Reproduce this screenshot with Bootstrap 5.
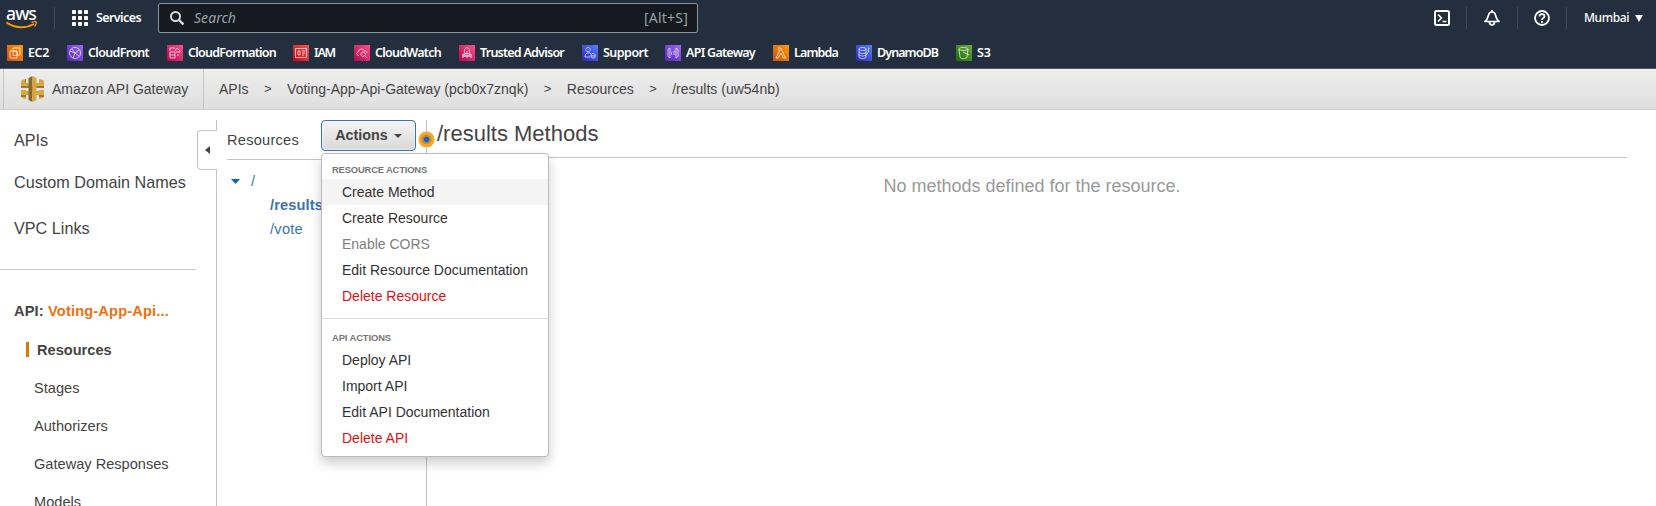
<!DOCTYPE html>
<html lang="en">
<head>
<meta charset="utf-8">
<title>API Gateway</title>
<link href="https://cdn.jsdelivr.net/npm/bootstrap@5.3.0/dist/css/bootstrap.min.css" rel="stylesheet">
<style>
body{font-family:"Liberation Sans",Arial,sans-serif;font-size:14px;line-height:20px;color:#444;height:506px;overflow:hidden;background:#fff}
svg{display:block;flex:none}
.aws-top{background:#232f3e;height:69px;border-bottom:1px solid #545b64;color:#fff;font-family:"Noto Sans","Open Sans",sans-serif}
.top-row{height:36px;padding-left:6px}
.aws-logo{overflow:visible}
.aws-logo text{font:500 17.5px "Noto Sans",sans-serif;fill:#fff}
.vr-line{width:1px;height:22px;background:#414750;flex:none}
.svc{font-size:12.5px;font-weight:600;margin-left:8px;width:62px}
.searchbox{width:540px;height:30px;background:#16191f;border:1px solid #879596;border-radius:2px;color:#95a5a6;font-size:14px;padding:0 9px 0 11px}
.searchbox em{margin-left:10px}
.region{font-size:12px;font-weight:500}
.favs{height:32px;padding-left:7px;padding-top:2px}
.fav{font-size:12.5px;font-weight:600;white-space:nowrap;flex:none}
.fav span{margin-left:5px}
.crumbs{height:41px;background:linear-gradient(#eee,#dfdfdf);border-bottom:1px solid #ccc;padding-left:3px}
.crumbs .home{width:201px;height:40px;border-left:1px solid #c4c4c4;border-right:1px solid #c4c4c4;padding-left:17px}
.crumbs .sep{font-size:13px;width:38.5px;text-align:center}
.sidebar{width:217px;font-size:16.2px;flex:none;padding-top:10px}
.side-in{border-right:1px solid #c4c4c4;height:400px}
.side-in a,.tree a{display:block;color:#444;text-decoration:none;white-space:nowrap}
.side-in .top-link{padding-left:14px}
.side-rule{width:196px;height:1px;background:#c8c8c8}
.sub{font-size:14.6px;height:38px;line-height:38px;padding-left:34px}
.sub.on{font-weight:700;padding-left:26px}
.sub.on i{display:inline-block;width:3px;height:15px;background:#e07700;margin-right:8px;vertical-align:-2px}
.handle{position:absolute;left:197px;top:20px;width:20px;height:40px;border:1px solid #c4c4c4;border-right:0;border-radius:4px 0 0 4px;background:#fff}
.respanel{width:209px;flex:none;padding:10px 0 0 10px}
.reshead{height:40px;border-bottom:1px solid #c4c4c4;width:199px}
.btn-act{width:95px;height:31px;border:1px solid #3b73af;border-radius:4px;background:linear-gradient(#f4f4f4,#d9d9d9);font-size:14.3px;font-weight:700;color:#444;padding:0 0 1px;line-height:26px;box-shadow:inset 0 0 0 1px #f6f6f6aa}
.caret{display:inline-block;border:4px solid transparent;border-top-color:#444;border-bottom:0;margin-left:6px;vertical-align:2px}
.tree .node{color:#3b73af}
.act-menu{display:block;left:94px;top:33px;width:228px;height:304px;padding:7px 0;border:1px solid #bbb;border-radius:4px;box-shadow:0 6px 12px rgba(0,0,0,.2);font-size:14px}
.act-menu .dropdown-item{height:26px;line-height:26px;padding:0 20px;color:#333}
.act-menu .dropdown-item.hot{background:#f4f4f4}
.act-menu .dropdown-header{font-size:9.4px;font-weight:700;color:#777;padding:0 10px;height:18px;line-height:17px}
.act-menu .dropdown-divider{margin:9px 0 10px;border-color:#ddd;opacity:1}
.act-menu .dropdown-item.del{color:#d11}
.act-menu .dropdown-item.off{color:#808080}
.methods{border-left:1px solid #c4c4c4;margin-top:10px;height:400px;padding-right:29px}
.methods h1{font-size:22px;line-height:28px;font-weight:400;height:38px;margin:0;padding-left:10px;border-bottom:1px solid #c4c4c4}
.dot{position:absolute;left:418px;top:21px;z-index:2}
.none-msg{font-size:18px;color:#999;text-align:center;margin-top:15px;padding-left:10px;line-height:26px}
</style>
</head>
<body>
<header class="aws-top">
  <div class="top-row d-flex align-items-center">
    <svg class="aws-logo" width="32" height="24" viewBox="0 0 32 24"><text id="logo" x="0" y="14">aws</text><path d="M.5 16.500C9 22.500 20 22.500 28 18" fill="none" stroke="#f90" stroke-width="2"/><path d="M25.500 16.300c3-1 5.500-.7 5 .3s-.5 2.800-2 4" fill="none" stroke="#f90" stroke-width="1.300"/></svg>
    <div class="vr-line" style="margin-left:16px"></div>
    <svg style="margin-left:17px" width="16" height="16" fill="#fff"><g id="r"><rect width="4" height="4" rx=".8"/><rect x="6" width="4" height="4" rx=".8"/><rect x="12" width="4" height="4" rx=".8"/></g><use href="#r" y="6"/><use href="#r" y="12"/></svg>
    <div class="svc"><span data-w="45">Services</span></div>
    <div class="searchbox d-flex align-items-center">
      <svg width="14" height="14" fill="none" stroke="#d5dbdb" stroke-width="2"><circle cx="5.500" cy="5.500" r="4.500"/><path d="M9 9l4.500 4.500" stroke-width="2.400"/></svg>
      <em data-w="42">Search</em><span class="ms-auto" data-w="44">[Alt+S]</span>
    </div>
    <div class="d-flex align-items-center ms-auto" style="padding-right:13px">
      <svg width="16" height="16" fill="none" stroke="#fff" stroke-width="2"><rect x="1" y="1" width="14" height="14" rx="1.500"/><path d="M4 4.500L7.500 8 4 11.500M8.500 11.500H12.500" stroke-width="1.600"/></svg>
      <div class="vr-line mx-3"></div>
      <svg width="18" height="16" viewBox="0 0 18 16" fill="none" stroke="#fff" stroke-width="1.700"><path d="M2 11.500h14c-3-2-2.500-4-3.500-6.500C12 3 11 2 9 2S6 3 5.500 5C4.500 7.500 5 9.500 2 11.500zM9 0v2M6.500 12c0 4 5 4 5 0" stroke-linejoin="round"/></svg>
      <div class="vr-line mx-3"></div>
      <svg width="16" height="16" fill="none" stroke="#fff" stroke-width="1.800"><circle cx="8" cy="8" r="7"/><path d="M5.500 6.500c0-3.500 5-3 5-.3C10.500 8 8 7.800 8 10M8 11v2"/></svg>
      <div class="vr-line ms-3"></div>
      <span class="region" style="margin-left:17px" data-w="45">Mumbai</span>
      <svg style="margin-left:6px" width="8" height="7"><path d="M0 0h8L4 7z" fill="#fff"/></svg>
    </div>
  </div>
  <div class="favs d-flex align-items-center" id="favs"></div>
</header>
<nav class="crumbs d-flex align-items-center">
  <div class="home d-flex align-items-center">
    <svg width="23" height="26" viewBox="0 0 23 26"><path d="M1 4l4-1v4h3v4H5v1H0V5zM22 4l-4-1v4h-3v4h3v1h5V5zM0 14h5v1h3v4H5v4l-4-1-1-3zM23 14h-5v1h-3v4h3v4l4-1 1-3z" fill="#d9a741"/><path d="M8 10h7v6H8z" fill="#d9a741"/><path d="M0 10h8v2H0zM0 19h5v2H0zM15 10h8v2h-8zM18 19h5v2h-5zM4 3h1v4H4z" fill="#a87a28"/><path d="M7.500 2l4-2v26l-4-2z" fill="#876929"/><path d="M15.500 2l-4-2v26l4-2z" fill="#d9a741"/></svg>
    <span class="ms-2">Amazon API Gateway</span>
  </div>
  <span style="margin-left:15px">APIs</span><span class="sep">&gt;</span><span>Voting-App-Api-Gateway (pcb0x7znqk)</span><span class="sep">&gt;</span><span>Resources</span><span class="sep">&gt;</span><span>/results (uw54nb)</span>
</nav>
<div class="d-flex position-relative">
  <aside class="sidebar">
    <div class="side-in">
      <a class="top-link" style="padding-top:10px">APIs</a>
      <a class="top-link" style="padding-top:22px">Custom Domain Names</a>
      <a class="top-link" style="padding-top:26px">VPC Links</a>
      <div class="side-rule" style="margin-top:31px"></div>
      <a class="top-link fw-bold" style="padding-top:31px;font-size:14.600px"><span data-w="34">API:&nbsp;</span><span style="color:#ec7211" data-w="121">Voting-App-Api...</span></a>
      <div style="height:10px"></div>
      <a class="sub on"><i></i>Resources</a>
      <a class="sub">Stages</a><a class="sub">Authorizers</a><a class="sub">Gateway Responses</a><a class="sub">Models</a>
    </div>
  </aside>
  <div class="handle d-flex align-items-center justify-content-center"><svg width="5" height="8"><path d="M5 0v8L0 4z" fill="#444"/></svg></div>
  <section class="respanel">
    <div class="reshead position-relative d-flex">
      <div style="font-size:14.600px;padding-top:10px;width:94px;flex:none"><span data-w="72">Resources</span></div>
      <button class="btn btn-act flex-shrink-0">Actions<span class="caret"></span></button>
      <div class="dropdown-menu act-menu">
        <h6 class="dropdown-header"><span data-w="95">RESOURCE ACTIONS</span></h6>
        <a class="dropdown-item hot">Create Method</a><a class="dropdown-item">Create Resource</a><a class="dropdown-item off">Enable CORS</a><a class="dropdown-item">Edit Resource Documentation</a><a class="dropdown-item del">Delete Resource</a>
        <hr class="dropdown-divider">
        <h6 class="dropdown-header"><span data-w="59">API ACTIONS</span></h6>
        <a class="dropdown-item">Deploy API</a><a class="dropdown-item">Import API</a><a class="dropdown-item">Edit API Documentation</a><a class="dropdown-item del">Delete API</a>
      </div>
    </div>
    <div class="tree" style="font-size:14.600px;padding-top:11px">
      <div class="d-flex align-items-center" style="padding-left:4px"><svg width="9" height="5"><path d="M0 0h9L4.500 5z" fill="#1166bb"/></svg><a class="node" style="margin-left:11px">/</a></div>
      <a class="node fw-bold" style="padding:4px 0 0 43px"><span data-w="53">/results</span></a>
      <a class="node" style="padding:4px 0 0 43px"><span data-w="33">/vote</span></a>
    </div>
  </section>
  <main class="methods flex-grow-1">
    <h1>/results Methods</h1>
    <div class="none-msg">No methods defined for the resource.</div>
  </main>
  <svg class="dot" width="17" height="17"><circle cx="8.500" cy="8.500" r="8" fill="#faa62b"/><circle cx="8.500" cy="8.500" r="5" fill="#c98b26"/><circle cx="8.500" cy="8.500" r="2.800" fill="#1468c0"/></svg>
</div>
<script>
// label, gradient start, gradient end, distance to next icon, label width, glyph path
const favs=[
['EC2','#c8511b','#f90',60,21,'M3 6h7v7H3zM6 6V3h7v7h-3M6 6.500h4v4H6z'],
['CloudFront','#4d27aa','#a166ff',100,61,'M8 2.500a5.500 5.500 0 1 0 .1 0M3 6l5 2 4-3M8 8l-2 5M8 8l4 3M5 4l3 4'],
['CloudFormation','#b0084d','#ff4f8b',126,88,'M3 6V3h5M3 7h5v6H3zM3 10h5M9 7h4c0-2-1-2-2-3s-3 0-3 2M10 10h2'],
['IAM','#bd0816','#ff5252',61,21,'M2.500 3.500h11v9h-11zM5 6h2v4H5zM9 6h3M9 8h3M9 10h2'],
['CloudWatch','#b0084d','#ff4f8b',105,66,'M5 10.500C2 10.500 2 7 4.500 7c0-3.500 5-4 6-1 2 0 2.500 1 2.500 2M9 7a2.200 2.200 0 1 0 .1 0M11 11l2 2'],
['Trusted Advisor','#b0084d','#ff4f8b',123,84,'M8 2.500c3 1 3 4 2 6H6c-1-2-1-5 2-6zM4 13V9h2v3M12 13V9h-2v3M8 6v7M3 11h10'],
['Support','#2e27ad','#527fff',83,45,'M6 2.500a2.200 2.200 0 1 0 .1 0M3 12c0-5 5-5 6-3M3 12h5M11 8.500a2.300 2.300 0 1 0 .1 0M9 11h4'],
['API Gateway','#4d27aa','#a166ff',108,69,'M3 4.500l2-1.500v10l-2-1.500zM11 3l2 1.500v7L11 13zM7 6.500L6 8l1 2M9 6v4M9 6h1'],
['Lambda','#c8511b','#f90',83,44,'M5 3h3l4 9h1M5 5h2L3 13h2l3-5M8 8l2.500 5H13'],
['DynamoDB','#2e27ad','#527fff',100,61,'M3 4c0-2 7-2 7 0s-7 2-7 0v8c0 2 7 2 7 0V4M3 7c0 2 7 2 7 0M3 9.500c0 2 7 2 7 0M12 3h1l-1 3h1l-3 4'],
['S3','#1b660f','#6cae3e',40,14,'M3 4c0-2 9-2 9 0s-9 2-9 0l1 8c0 2 7 2 7 0l1-8M7 7l6 3']];
document.getElementById('favs').innerHTML=favs.map(([n,a,b,w,tw,p],i)=>`<div class="fav d-flex align-items-center" style="width:${w}px"><svg width="16" height="16"><defs><linearGradient id="g${i}" x1="0" y1="1" x2="1" y2="0"><stop stop-color="${a}"/><stop offset="1" stop-color="${b}"/></linearGradient></defs><rect width="16" height="16" fill="url(#g${i})"/><path d="${p}" fill="none" stroke="#fff" stroke-opacity=".85" stroke-width=".8"/></svg><span data-w="${tw}">${n}</span></div>`).join('');
// fit each label to its column by tracking
document.querySelectorAll('[data-w]').forEach(s=>{const d=+s.dataset.w-s.getBoundingClientRect().width;s.style.letterSpacing=(d/s.textContent.length)+'px'});
const logo=document.getElementById('logo');
logo.style.letterSpacing=(30-logo.getComputedTextLength())/3+'px';
</script>
<script src="https://cdn.jsdelivr.net/npm/bootstrap@5.3.0/dist/js/bootstrap.bundle.min.js"></script>
</body>
</html>
